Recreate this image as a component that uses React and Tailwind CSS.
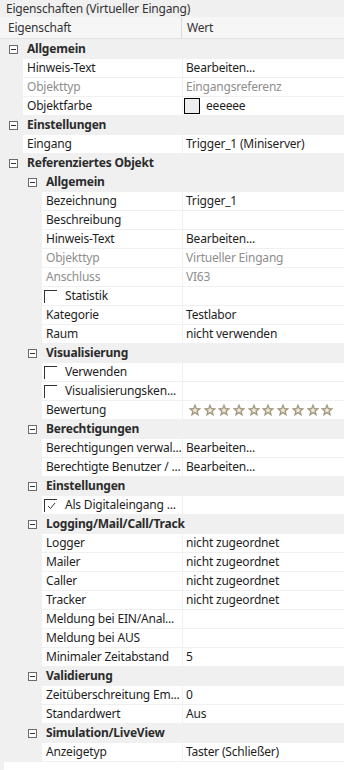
import React from 'react';

const rows = [
  { t: 'cat', l: 1, label: 'Allgemein' },
  { t: 'prop', l: 1, label: 'Hinweis-Text', value: 'Bearbeiten...' },
  { t: 'prop', l: 1, label: 'Objekttyp', value: 'Eingangsreferenz', off: true },
  { t: 'color', l: 1, label: 'Objektfarbe', value: 'eeeeee' },
  { t: 'cat', l: 1, label: 'Einstellungen' },
  { t: 'prop', l: 1, label: 'Eingang', value: 'Trigger_1 (Miniserver)' },
  { t: 'cat', l: 1, label: 'Referenziertes Objekt' },
  { t: 'cat', l: 2, label: 'Allgemein' },
  { t: 'prop', l: 2, label: 'Bezeichnung', value: 'Trigger_1' },
  { t: 'prop', l: 2, label: 'Beschreibung', value: '' },
  { t: 'prop', l: 2, label: 'Hinweis-Text', value: 'Bearbeiten...' },
  { t: 'prop', l: 2, label: 'Objekttyp', value: 'Virtueller Eingang', off: true },
  { t: 'prop', l: 2, label: 'Anschluss', value: 'VI63', off: true },
  { t: 'check', l: 2, label: 'Statistik' },
  { t: 'prop', l: 2, label: 'Kategorie', value: 'Testlabor' },
  { t: 'prop', l: 2, label: 'Raum', value: 'nicht verwenden' },
  { t: 'cat', l: 2, label: 'Visualisierung' },
  { t: 'check', l: 2, label: 'Verwenden' },
  { t: 'check', l: 2, label: 'Visualisierungsken...' },
  { t: 'stars', l: 2, label: 'Bewertung' },
  { t: 'cat', l: 2, label: 'Berechtigungen' },
  { t: 'prop', l: 2, label: 'Berechtigungen verwal...', value: 'Bearbeiten...' },
  { t: 'prop', l: 2, label: 'Berechtigte Benutzer / ...', value: 'Bearbeiten...' },
  { t: 'cat', l: 2, label: 'Einstellungen' },
  { t: 'check', l: 2, label: 'Als Digitaleingang ...', checked: true },
  { t: 'cat', l: 2, label: 'Logging/Mail/Call/Track' },
  { t: 'prop', l: 2, label: 'Logger', value: 'nicht zugeordnet' },
  { t: 'prop', l: 2, label: 'Mailer', value: 'nicht zugeordnet' },
  { t: 'prop', l: 2, label: 'Caller', value: 'nicht zugeordnet' },
  { t: 'prop', l: 2, label: 'Tracker', value: 'nicht zugeordnet' },
  { t: 'prop', l: 2, label: 'Meldung bei EIN/Anal...', value: '' },
  { t: 'prop', l: 2, label: 'Meldung bei AUS', value: '' },
  { t: 'prop', l: 2, label: 'Minimaler Zeitabstand', value: '5' },
  { t: 'cat', l: 2, label: 'Validierung' },
  { t: 'prop', l: 2, label: 'Zeitüberschreitung Em...', value: '0' },
  { t: 'prop', l: 2, label: 'Standardwert', value: 'Aus' },
  { t: 'cat', l: 2, label: 'Simulation/LiveView' },
  { t: 'prop', l: 2, label: 'Anzeigetyp', value: 'Taster (Schließer)' },
];

function Minus() {
  return (
    <div className="w-[9px] h-[9px] border border-[#6b6b6b] bg-white flex items-center justify-center">
      <div className="w-[5px] h-px bg-[#333]" />
    </div>
  );
}

function Star() {
  return (
    <svg width="14" height="14" viewBox="0 0 24 24">
      <polygon
        points="12,1 15.1,8.6 23,9.2 17,14.4 18.9,22.5 12,18.2 5.1,22.5 7,14.4 1,9.2 8.9,8.6"
        fill="#a39a80"
      />
      <polygon
        points="12,7 13.5,10.7 17.4,11 14.4,13.5 15.3,17.3 12,15.2 8.7,17.3 9.6,13.5 6.6,11 10.5,10.7"
        fill="#ece8dc"
      />
    </svg>
  );
}

function Row({ r }) {
  if (r.t === 'cat') {
    return (
      <div className="h-[18px] flex items-center">
        <div className={r.l === 1 ? 'w-[27px] pl-[9px]' : 'w-[46px] pl-[28px]'}>
          <Minus />
        </div>
        <span className="font-bold text-[#2b2b2b]">{r.label}</span>
      </div>
    );
  }
  const indent = r.l === 1 ? 'ml-[23px] w-[159px]' : 'ml-[42px] w-[140px]';
  let name;
  if (r.t === 'check') {
    name = (
      <div className={`${indent} bg-white h-full flex items-center pl-[2px] whitespace-nowrap overflow-hidden`}>
        <div className="w-[13px] h-[13px] border-t border-l border-[#333] relative shrink-0">
          {r.checked && (
            <svg className="absolute left-[2px] top-[2px]" width="9" height="8" viewBox="0 0 9 8">
              <path d="M1 4 L3.5 6.5 L8 1" stroke="#333" strokeWidth="1" fill="none" />
            </svg>
          )}
        </div>
        <span className="ml-[8px]">{r.label}</span>
      </div>
    );
  } else {
    name = (
      <div className={`${indent} bg-white h-full flex items-center pl-[4px] whitespace-nowrap overflow-hidden ${r.off ? 'text-[#8e8e8e]' : ''}`}>
        {r.label}
      </div>
    );
  }
  let value = null;
  if (r.t === 'prop') {
    value = <span className={r.off ? 'text-[#8e8e8e]' : ''}>{r.value}</span>;
  } else if (r.t === 'color') {
    value = (
      <>
        <div className="w-[16px] h-[16px] border border-black bg-[#eeeeee] -ml-[2px]" />
        <span className="ml-[6px]">{r.value}</span>
      </>
    );
  } else if (r.t === 'stars') {
    value = (
      <div className="flex gap-[0.7px] ml-[2px]">
        {Array.from({ length: 10 }).map((_, i) => (
          <Star key={i} />
        ))}
      </div>
    );
  }
  return (
    <div className="h-[18px] flex">
      {name}
      <div className="ml-px flex-1 bg-white h-full flex items-center pl-[3px] whitespace-nowrap overflow-hidden">
        {value}
      </div>
    </div>
  );
}

export default function App() {
  return (
    <div
      className="w-[344px] h-[770px] bg-[#f0f0f0] text-[12px] tracking-[-0.2px] text-[#1e1e1e] overflow-hidden flex flex-col"
      style={{ fontFamily: '"Noto Sans", "Open Sans", sans-serif' }}
    >
      <div className="h-[17px] flex items-center pl-[6px] text-[#333]">
        Eigenschaften (Virtueller Eingang)
      </div>
      <div className="h-[22px] flex bg-[#f6f6f6] border-b border-[#e3e3e3] text-[#333]">
        <div className="w-[182px] border-r border-[#dadada] flex items-center pl-[8px]">Eigenschaft</div>
        <div className="flex-1 flex items-center pl-[5px]">Wert</div>
      </div>
      <div className="flex flex-col gap-px mt-px">
        {rows.map((r, i) => (
          <Row key={i} r={r} />
        ))}
      </div>
      <div className="flex-1 bg-white ml-[4px] mt-px" />
    </div>
  );
}
